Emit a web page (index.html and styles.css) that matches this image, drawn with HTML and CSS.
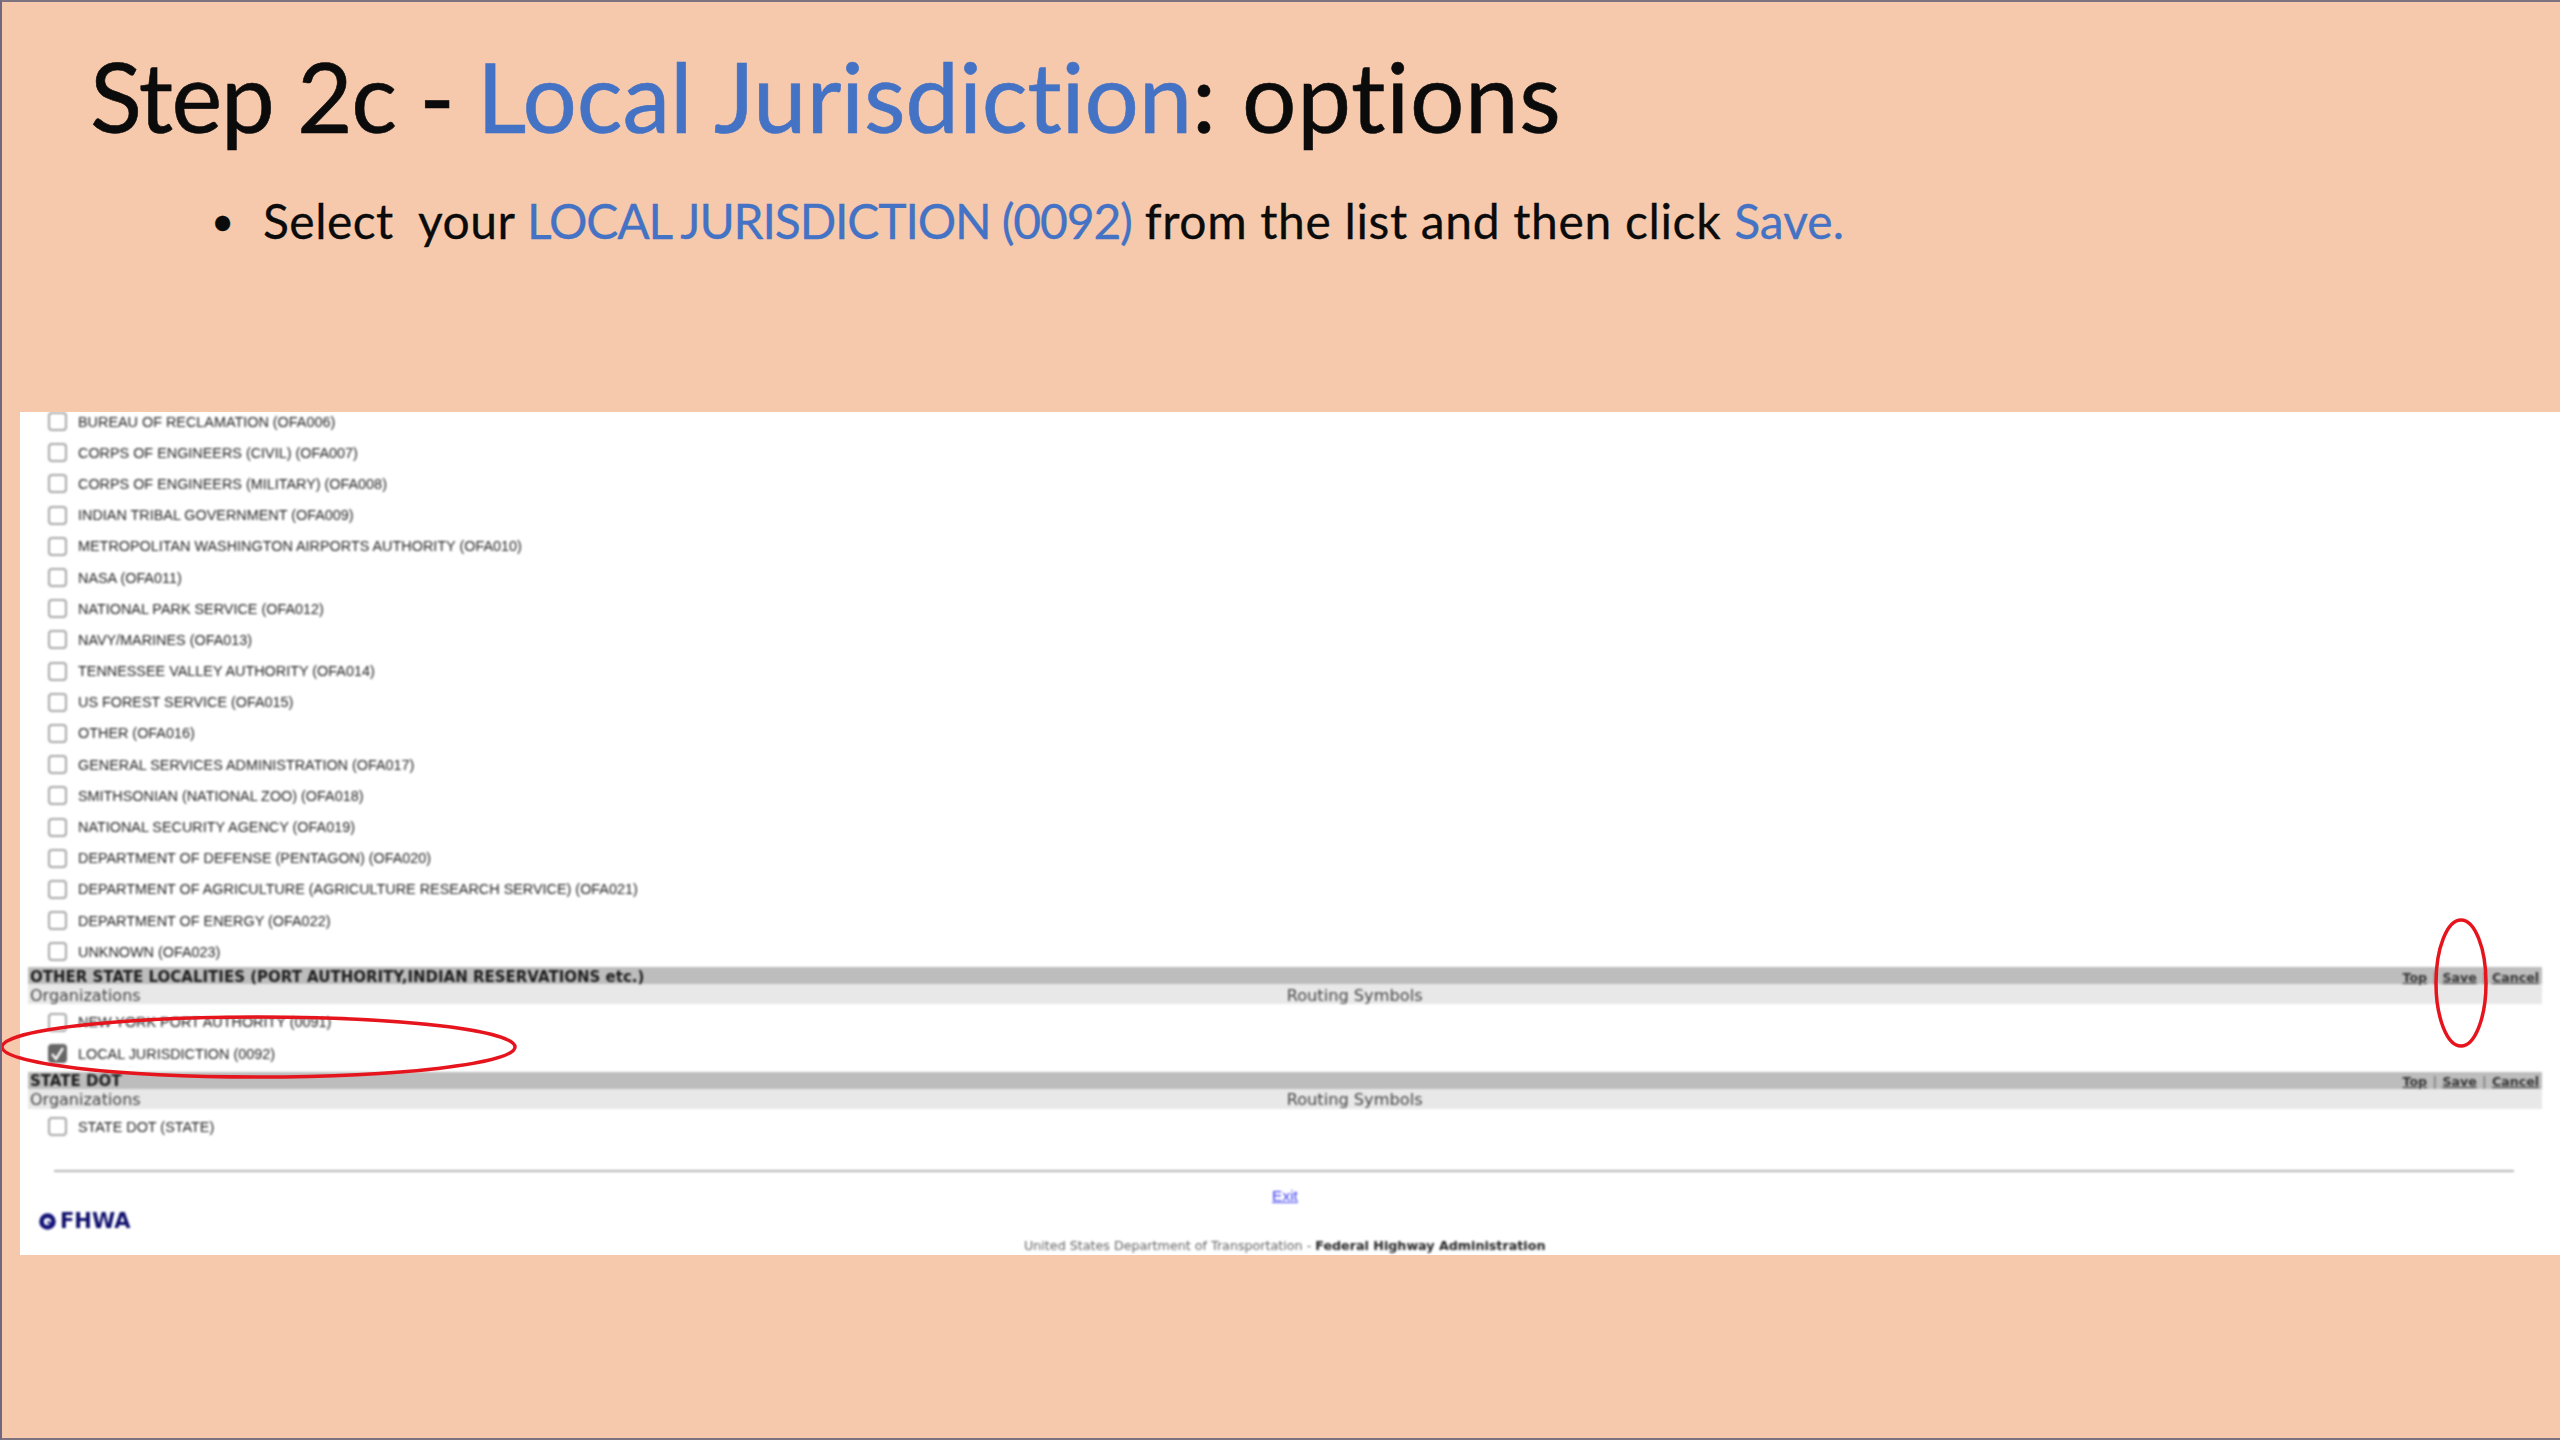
FILE: index.html
```html
<!DOCTYPE html>
<html lang="en">
<head>
<meta charset="utf-8">
<title>Step 2c - Local Jurisdiction: options</title>
<link rel="stylesheet" href="styles.css">
</head>
<body>
<main class="slide">
  <header class="slide-head">
    <h1 class="title"><span class="title-lead">Step 2c - </span><span class="accent">Local Jurisdiction</span><span class="title-tail">: options</span></h1>
    <p class="bullet"><span class="dot">•</span><span><span class="b-lead">Select&nbsp; your </span><span class="accent b-code">LOCAL JURISDICTION (0092)</span><span class="b-mid"> from the list and then click </span><span class="accent">Save.</span></span></p>
  </header>
  <section class="shot">
    <div class="soft">
      <ul class="orgs first">
        <li><i class="box"></i>BUREAU OF RECLAMATION (OFA006)</li>
        <li><i class="box"></i>CORPS OF ENGINEERS (CIVIL) (OFA007)</li>
        <li><i class="box"></i>CORPS OF ENGINEERS (MILITARY) (OFA008)</li>
        <li><i class="box"></i>INDIAN TRIBAL GOVERNMENT (OFA009)</li>
        <li><i class="box"></i>METROPOLITAN WASHINGTON AIRPORTS AUTHORITY (OFA010)</li>
        <li><i class="box"></i>NASA (OFA011)</li>
        <li><i class="box"></i>NATIONAL PARK SERVICE (OFA012)</li>
        <li><i class="box"></i>NAVY/MARINES (OFA013)</li>
        <li><i class="box"></i>TENNESSEE VALLEY AUTHORITY (OFA014)</li>
        <li><i class="box"></i>US FOREST SERVICE (OFA015)</li>
        <li><i class="box"></i>OTHER (OFA016)</li>
        <li><i class="box"></i>GENERAL SERVICES ADMINISTRATION (OFA017)</li>
        <li><i class="box"></i>SMITHSONIAN (NATIONAL ZOO) (OFA018)</li>
        <li><i class="box"></i>NATIONAL SECURITY AGENCY (OFA019)</li>
        <li><i class="box"></i>DEPARTMENT OF DEFENSE (PENTAGON) (OFA020)</li>
        <li><i class="box"></i>DEPARTMENT OF AGRICULTURE (AGRICULTURE RESEARCH SERVICE) (OFA021)</li>
        <li><i class="box"></i>DEPARTMENT OF ENERGY (OFA022)</li>
        <li><i class="box"></i>UNKNOWN (OFA023)</li>
      </ul>
      <div class="bar"><b>OTHER STATE LOCALITIES (PORT AUTHORITY,INDIAN RESERVATIONS etc.)</b><span class="links"><a>Top</a><span class="sep">|</span><a>Save</a><span class="sep">|</span><a>Cancel</a></span></div>
      <div class="cols"><span>Organizations</span><span class="routing">Routing Symbols</span></div>
      <ul class="orgs mid">
        <li><i class="box"></i>NEW YORK PORT AUTHORITY (0091)</li>
        <li><i class="box checked"><svg viewBox="0 0 19 19" class="tick"><path d="M4 10l4 5 7-11" fill="none" stroke="#fff" stroke-width="2.4"/></svg></i>LOCAL JURISDICTION (0092)</li>
      </ul>
      <div class="bar"><b>STATE DOT</b><span class="links"><a>Top</a><span class="sep">|</span><a>Save</a><span class="sep">|</span><a>Cancel</a></span></div>
      <div class="cols"><span>Organizations</span><span class="routing">Routing Symbols</span></div>
      <ul class="orgs last">
        <li><i class="box"></i>STATE DOT (STATE)</li>
      </ul>
      <hr class="rule">
      <div class="exit-row"><a class="exit">Exit</a></div>
      <div class="logo-row">
        <svg class="seal" viewBox="0 0 16 16"><circle cx="8" cy="8" r="5.6" fill="none" stroke="#14147a" stroke-width="4.4"/><path d="M8 8l5 4" stroke="#14147a" stroke-width="2"/></svg>
        <span class="fhwa">FHWA</span>
      </div>
      <p class="agency">United States Department of Transportation - <b>Federal Highway Administration</b></p>
    </div>
  </section>
  <svg class="ring ring-local" viewBox="0 0 517 64"><ellipse cx="258.5" cy="32" rx="256.5" ry="30"/></svg>
  <svg class="ring ring-save" viewBox="0 0 54 130"><ellipse cx="27" cy="65" rx="25" ry="63"/></svg>
</main>
</body>
</html>
```
FILE: styles.css
```css
* { box-sizing: border-box; }
html, body { margin: 0; padding: 0; }
body { width: 2560px; height: 1440px; overflow: hidden; background: #f6c9ac; }

.slide {
  position: relative;
  width: 2560px;
  height: 1440px;
  background: #f6c9ac;
  border-top: 2px solid #7c7280;
  border-left: 2px solid #6f6680;
  border-bottom: 2px solid #7c7280;
  overflow: hidden;
}

.slide-head { height: 410px; padding: 39px 0 0 88px; font-family: "Lato", "Liberation Sans", sans-serif; color: #0b0b0b; }
.accent { color: #4472c4; }
.title { margin: 0; font-size: 96px; line-height: 110px; font-weight: 400; letter-spacing: -0.2px; -webkit-text-stroke: 0.6px currentColor; }
.title-lead { letter-spacing: -1.25px; }
.title-tail { letter-spacing: 0.7px; }
.bullet { display: flex; margin: 40px 0 0 126px; font-size: 48px; line-height: 60px; letter-spacing: 0; -webkit-text-stroke: 0.3px currentColor; }
.b-lead { letter-spacing: 0.45px; }
.b-code { letter-spacing: -1.15px; }
.b-mid { letter-spacing: 0.65px; }
.dot { width: 47px; margin-left: -5px; margin-right: 5px; font-size: 40px; }

.shot { margin-left: 18px; height: 843px; background: #fff; overflow: hidden; }
.soft { filter: blur(0.8px); height: 100%; font-family: "Liberation Sans", Arial, sans-serif; color: #242424; }

.orgs { list-style: none; margin: 0; padding: 0; }
.orgs.first { margin-top: -6px; }
.orgs.mid { margin: 2.4px 0 2.6px; }
.orgs.last { margin: 2.4px 0 0; }
.orgs li { display: flex; align-items: center; height: 31.2px; padding-left: 28px; font-size: 14.4px; }
.box { flex: none; width: 19px; height: 19px; margin-right: 11px; background: #fff; border: 2px solid #a8a8a8; border-radius: 4px; }
.box.checked { background: #666; border-color: #666; position: relative; }
.tick { position: absolute; inset: -2px; width: 19px; height: 19px; }

.bar, .cols { margin: 0 18px 0 8px; display: flex; font-family: "DejaVu Sans", Verdana, sans-serif; }
.bar { height: 17px; align-items: center; background: #bdbdbd; justify-content: space-between; font-size: 15px; line-height: 15px; color: #1c1c1c; padding: 3px 2px 0; }
.links { font-size: 12.6px; font-weight: 700; display: flex; gap: 5.5px; margin-right: 1px; }
.links a { text-decoration: underline; color: #333; }
.sep { color: #666; font-weight: 400; }
.cols { height: 20px; align-items: center; background: #e8e8e8; font-size: 16px; color: #444; padding: 2px 2px 0; }
.routing { margin-left: 1146px; font-size: 16.2px; }

.rule { height: 2px; margin: 28px 46px 0 34px; background: #b5b5b5; border: 0; }
.exit-row { text-align: center; margin: 16px 0 0 -10px; line-height: 16px; font-size: 15.5px; }
.exit { color: #4040f0; text-decoration: underline; }
.logo-row { display: flex; align-items: center; gap: 4px; margin: 8px 0 0 19px; height: 18px; }
.seal { width: 17px; height: 17px; }
.fhwa { font-weight: 700; font-size: 21px; color: #10106e; font-family: "DejaVu Sans", sans-serif; }
.agency { margin: 7px 0 0 1004px; font-family: "DejaVu Sans", Verdana, sans-serif; font-size: 12.7px; line-height: 18px; color: #666; white-space: nowrap; }
.agency b { color: #222; }

.ring { position: absolute; fill: none; stroke: #e6141c; stroke-width: 3.5; overflow: visible; }
.ring-local { left: -2px; top: 1013px; width: 517px; height: 64px; }
.ring-save { left: 2432px; top: 916px; width: 54px; height: 130px; }
```
